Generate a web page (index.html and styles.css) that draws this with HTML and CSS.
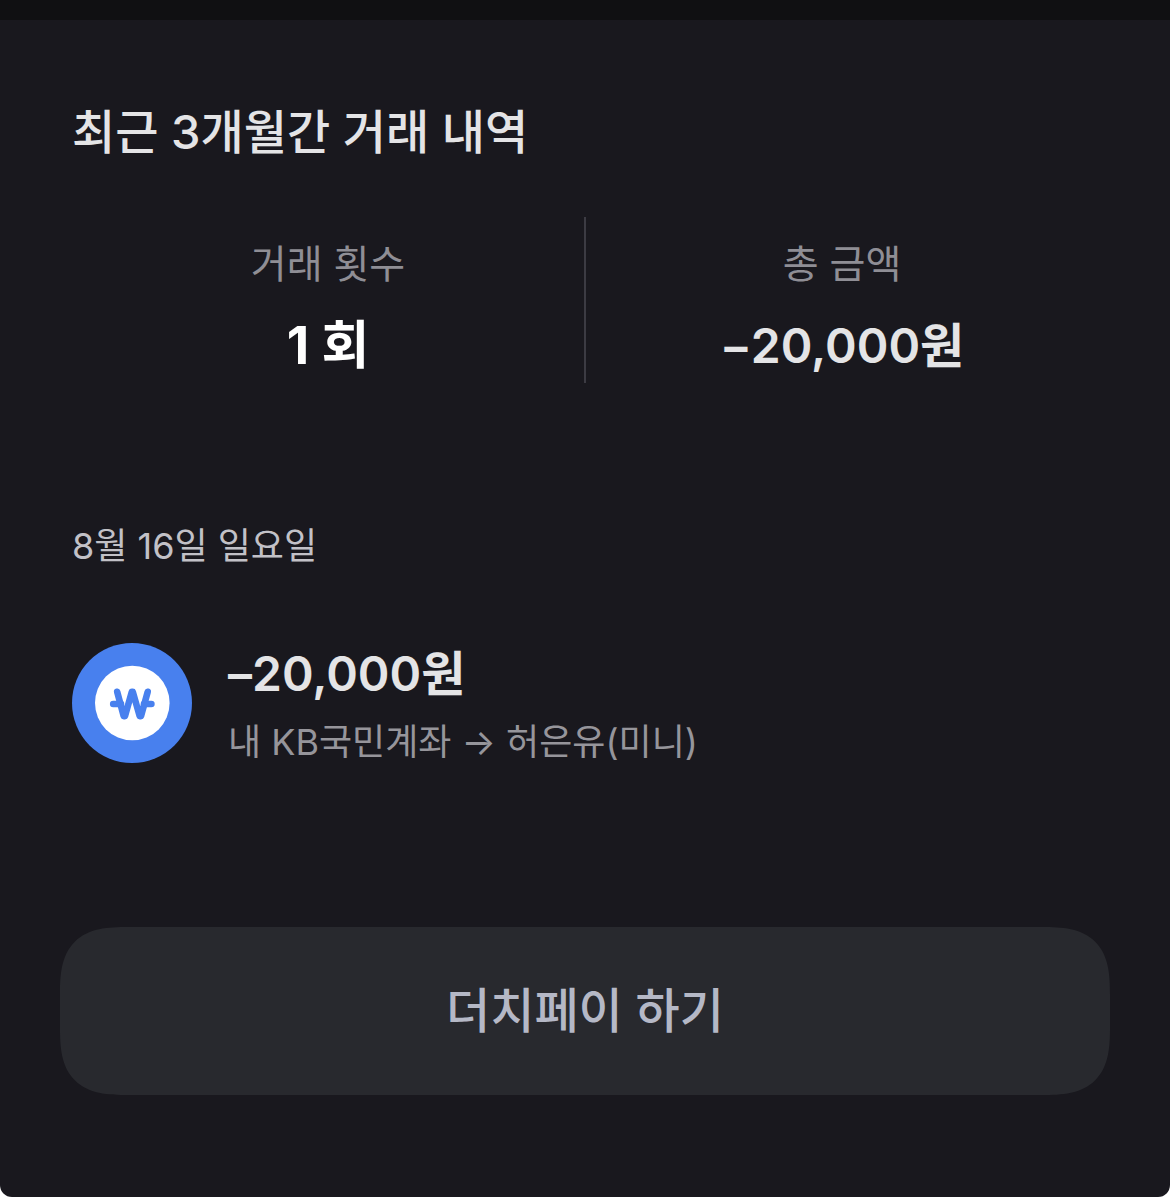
FILE: index.html
```
<!DOCTYPE html>
<html lang="ko">
<head>
    <meta charset="UTF-8">
    <meta name="viewport" content="width=device-width, initial-scale=1.0">
    <title>최근 3개월간 거래 내역</title>
    <link rel="stylesheet" href="styles.css">
</head>
<body>
    <main class="history">
        <h1 class="title">최근 3개월간 거래 내역</h1>

        <dl class="summary">
            <div class="summary-item">
                <dt>거래 횟수</dt>
                <dd class="count">1 회</dd>
            </div>
            <div class="summary-item">
                <dt>총 금액</dt>
                <dd>−20,000원</dd>
            </div>
        </dl>

        <h2 class="date">8월 16일 일요일</h2>

        <div class="transaction">
            <svg class="won-icon" viewBox="0 0 120 120" aria-hidden="true">
                <circle cx="60" cy="60" r="60" fill="#4880ee"/>
                <circle cx="60.3" cy="60" r="37.3" fill="#fff"/>
                <g fill="none" stroke="#4880ee" stroke-width="6.6" stroke-linecap="round" stroke-linejoin="round">
                    <path d="M45.2 48.8L51.7 73.2H53L59.8 48.8H60.8L67.7 73.2H69L75.7 48.8"/>
                    <path d="M41.2 61H49M72 61H79.4"/>
                </g>
            </svg>
            <div class="transaction-text">
                <p class="amount">–20,000원</p>
                <p class="memo">내 KB국민계좌 → 허은유(미니)</p>
            </div>
        </div>

        <button type="button" class="dutch-pay">더치페이 하기</button>
    </main>
</body>
</html>
```
FILE: styles.css
```
* { box-sizing: border-box; margin: 0; padding: 0; }
body { font-family: Inter, "Noto Sans CJK KR", sans-serif; background-color: #fff; color: #e4e4e6; }
.history { min-height: 100vh; padding: 78px 60px 102px; background-color: #19181e; border-top: 20px solid #101012; border-radius: 0 0 12px 12px; }

.title { padding: 0 12px; font-size: 47px; font-weight: 500; line-height: 68px; }

.summary { display: flex; margin-top: 51px; padding: 0 12px; }
.summary-item { flex: 1; padding: 19px 0 5px; text-align: center; }
.summary-item + .summary-item { border-left: 2px solid #3c3b43; }
.summary dt { font-size: 39px; line-height: 56px; color: #8f8e95; }
.summary dd { margin-top: 22px; font-size: 48px; font-weight: 600; line-height: 64px; }
.summary .count { color: #fff; font-size: 52px; font-weight: 700; }

.date { margin-top: 137px; padding: 0 12px; font-size: 36px; font-weight: 400; line-height: 52px; color: #c2c1c7; }

.transaction { display: flex; align-items: center; gap: 36px; margin-top: 66px; padding: 0 12px; }
.won-icon { flex: none; width: 120px; height: 120px; }
.amount { font-size: 48px; font-weight: 600; line-height: 72px; }
.memo { font-size: 36px; line-height: 52px; margin-top: 6px; color: #96959b; }

.dutch-pay { display: block; width: 100%; margin-top: 159px; padding: 48px; border: 0; border-radius: 52px; background-color: #28292e; color: #b5b8c6; font-family: inherit; font-size: 48px; font-weight: 500; line-height: 72px; }

@supports (corner-shape: superellipse(1.5)) {
    .dutch-pay { border-radius: 68px; corner-shape: superellipse(1.5); }
}
```
